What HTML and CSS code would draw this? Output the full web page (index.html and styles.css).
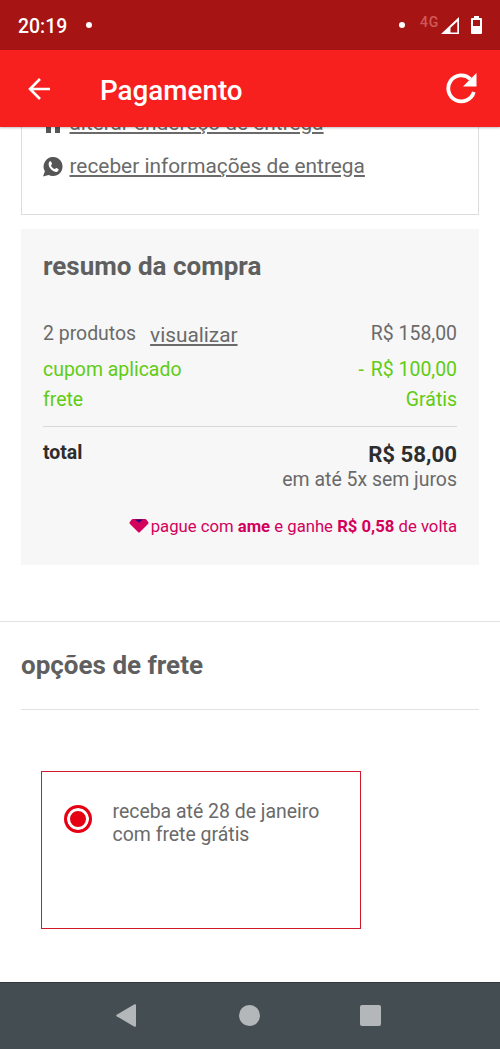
FILE: index.html
```html
<!DOCTYPE html>
<html lang="pt-BR">
<head>
<meta charset="utf-8">
<title>Pagamento</title>
<link rel="stylesheet" href="styles.css">
</head>
<body>
<div class="status">
  <span class="clock">20:19</span><i class="dot"></i>
  <div class="status-icons">
    <i class="dot"></i><span class="net">4G</span>
    <svg class="signal" width="18" height="17" viewBox="0 0 18 18" preserveAspectRatio="none"><path fill="#fff" fill-rule="evenodd" d="M18 0V18H0ZM16.3 4.8L9.5 11.3V16.3H16.3Z"/></svg>
    <svg class="battery" width="11" height="18" viewBox="0 0 11 18"><path fill="#fff" fill-rule="evenodd" d="M3 0H8V2H10Q11 2 11 3V17Q11 18 10 18H1Q0 18 0 17V3Q0 2 1 2H3ZM2 4V10H9V4Z"/></svg>
  </div>
</div>
<header class="appbar">
  <svg class="back" width="22" height="22" viewBox="0 0 22 22"><path fill="none" stroke="#fff" stroke-width="2.6" d="M22 11H2M12 1L2 11L12 21"/></svg>
  <h1>Pagamento</h1>
  <svg class="reload" width="31" height="31" viewBox="0 0 31 31"><path fill="none" stroke="#fff" stroke-width="3.8" d="M27.8 19A13 13 0 1 1 24.4 6.1"/><path fill="#fff" d="M30.5 0V13.5H17Z"/></svg>
</header>
<main class="page">
  <section class="address">
    <div class="link-row"><svg width="20" height="20" viewBox="0 0 20 20"><path fill="#555" d="M10 0L20 9H17V19H12V13H8V19H3V9H0Z"/></svg><a>alterar endereço de entrega</a></div>
    <div class="link-row"><svg width="20" height="20" viewBox="0 0 20 20"><path fill="#555" d="M10.3 0A9.5 9.5 0 1 1 5.6 17.9L0 19.6L1.9 14.3A9.5 9.5 0 0 1 10.3 0Z"/><path fill="#fff" d="M6.5 4.6C7.4 4 8 4.2 8.3 4.9L9 6.7C9.2 7.4 8 8.3 8 8.7C8.7 10.3 10 11.5 11.6 12.1C12.2 12.2 12.8 10.8 13.4 11L15.3 12C16.1 12.5 15.4 14.2 14.1 14.8C9.7 16.3 3.2 8.6 6.5 4.6Z"/></svg><a>receber informações de entrega</a></div>
  </section>
  <section class="summary">
    <h2>resumo da compra</h2>
    <div class="line products"><span>2 produtos</span><a>visualizar</a><span class="value">R$ 158,00</span></div>
    <div class="line coupon"><span>cupom aplicado</span><span class="value"><span class="minus">-</span>R$ 100,00</span></div>
    <div class="line shipping"><span>frete</span><span class="value">Grátis</span></div>
    <div class="line total"><strong>total</strong><strong class="value amount">R$ 58,00</strong></div>
    <p class="installments">em até 5x sem juros</p>
    <p class="cashback"><svg width="20" height="14" viewBox="0 0 20 14"><path fill="#d3005c" d="M4 0H16Q17 0 17.7 .9L19.2 3Q20 4 19 5L11 13Q10 14 9 13L1 5Q0 4 .8 3L2.3 .9Q3 0 4 0Z"/><path fill="#2b0a78" d="M6 .4H14L10 3.8Z"/></svg><span>pague com <b>ame</b> e ganhe <b>R$ 0,58</b> de volta</span></p>
  </section>
  <section class="freight">
    <h2>opções de frete</h2>
    <div class="option"><i class="radio"></i><p>receba até 28 de janeiro<br>com frete grátis</p></div>
  </section>
</main>
<nav class="navbar">
  <svg width="20" height="23" viewBox="0 0 20 23"><path fill="#b3b7b9" d="M18.5 .3Q20 -.3 20 1.2V21.8Q20 23.3 18.5 22.7L.7 12.2Q-.3 11.5 .7 10.8Z"/></svg>
  <i class="home"></i>
  <i class="recent"></i>
</nav>
</body>
</html>
```
FILE: styles.css
```css
* { box-sizing: border-box; }
body {
  margin: 0;
  height: 1049px;
  display: flex;
  flex-direction: column;
  overflow: hidden;
  background: #fff;
  color: #6a6a6a;
  font: 19.45px/24px Roboto, sans-serif;
}
h1, h2, p { margin: 0; }
a { text-decoration: underline; text-decoration-thickness: 1.5px; text-underline-offset: 2px; }
svg { display: block; flex: none; }

.status {
  height: 50px;
  flex: none;
  display: flex;
  align-items: center;
  padding: 0 18px;
  background: #a61414;
  color: #fff;
}
.clock { margin: 3px 19px 0 0; font-size: 19.4px; font-weight: 500; }
.dot { width: 6px; height: 6px; border-radius: 50%; background: #fff; }
.status-icons { margin-left: auto; display: flex; align-items: center; }
.net {
  margin: -6px 2px 0 15px;
  color: #d05a5a;
  font-size: 14px;
  font-weight: 500;
  letter-spacing: .8px;
  line-height: 18px;
}
.battery { margin-left: 12px; }

.appbar {
  position: relative;
  height: 77px;
  flex: none;
  display: flex;
  align-items: center;
  padding: 1px 23px 0 28px;
  background: #f81f1f;
  color: #fff;
  box-shadow: 0 1px 2px rgba(0, 0, 0, .25);
}
.appbar h1 { margin: 3px auto 0 50px; font-size: 27.8px; font-weight: 500; line-height: 34px; }
.reload { margin-top: -1px; }

.page { flex: 1; min-height: 0; }
.address {
  height: 88px;
  margin: 0 21px 14px;
  padding: 0 21px 27px;
  display: flex;
  flex-direction: column;
  justify-content: flex-end;
  border: 1px solid #ddd;
  border-top: 0;
}
.link-row { display: flex; flex: none; align-items: center; gap: 7px; height: 43px; font-size: 20.85px; }
.link-row svg { margin: 2px 0 0; width: 20px; }
.link-row a { margin-left: -.5px; }

h2 { color: #5f5f5f; font-size: 26px; font-weight: 700; line-height: 32px; }
.summary { height: 336px; margin: 0 21px; padding: 21px 22px 0; background: #f7f7f7; }
.line { display: flex; }
.value { margin-left: auto; }
.products { margin-top: 40px; }
.products a { margin: 1px 0 0 14px; font-size: 20.8px; }
.coupon, .shipping { color: #60cc14; }
.coupon { margin-top: 11px; }
.minus { margin-right: 7px; }
.shipping { margin-top: 6px; padding-bottom: 14px; border-bottom: 1px solid #d8d8d8; }
.total { margin-top: 14px; color: #2d2d2d; }
.amount { margin-top: 1px; font-size: 22.2px; }
.installments { margin-top: 2px; text-align: right; }
.cashback {
  display: flex;
  justify-content: flex-end;
  align-items: center;
  gap: 2px;
  margin-top: 23px;
  color: #d3005c;
  font-size: 16.7px;
}
.cashback svg { margin-top: -3px; }

.freight { margin-top: 56px; padding: 0 21px; border-top: 1px solid #e1e1e1; }
.freight h2 { padding: 27px 0 28px; border-bottom: 1px solid #e1e1e1; }
.option {
  display: flex;
  gap: 21px;
  width: 320px;
  height: 158px;
  margin: 61px 0 0 20px;
  padding: 28px 22px;
  border: 1.5px solid #d01a2b;
}
.option p { margin-left: -.5px; line-height: 23px; }
.radio {
  width: 28px;
  height: 28px;
  flex: none;
  margin-top: 5px;
  border: 3px solid #e60014;
  border-radius: 50%;
  background: #e60014;
  box-shadow: inset 0 0 0 3px #fff;
}

.navbar {
  height: 67px;
  flex: none;
  display: flex;
  align-items: center;
  padding: 0 0 2px 116px;
  background: #444d51;
  border-top: 1px solid #33393c;
}
.home { width: 21px; height: 21px; margin: 0 100px 0 103px; border-radius: 50%; background: #b3b7b9; }
.recent { width: 21px; height: 21px; border-radius: 2px; background: #b3b7b9; }
```
